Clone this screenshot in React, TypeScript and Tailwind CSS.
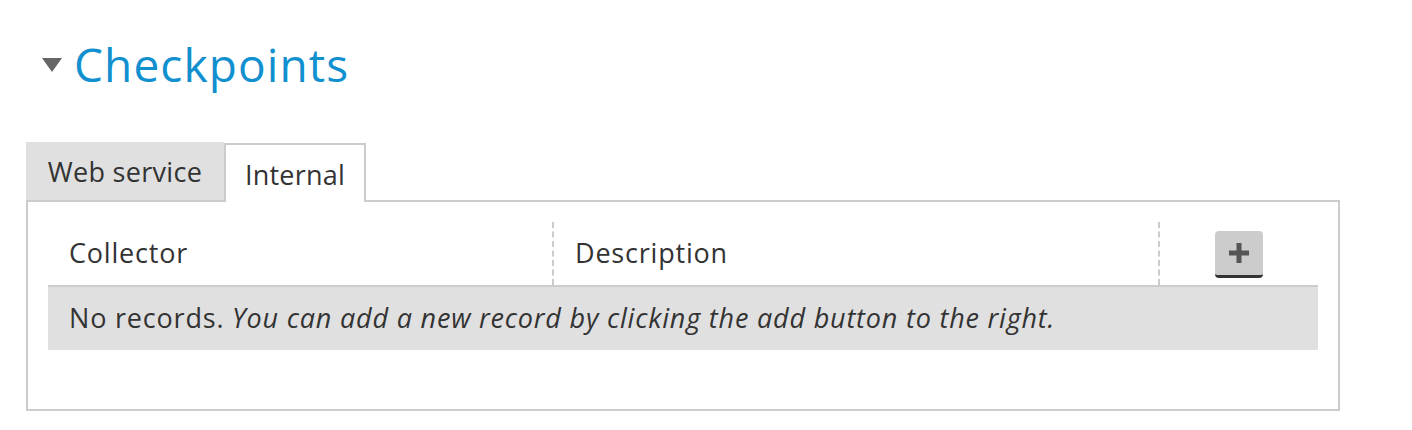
export default function App() {
  return (
    <div className="min-h-[430px] bg-white px-[26px] pt-[35px] font-['Open_Sans',sans-serif] text-[#333]">
      {/* section title */}
      <div className="flex items-center">
        <span className="ml-[16px] mr-[12px] mt-[2px] h-0 w-0 border-x-[10px] border-t-[14px] border-x-transparent border-t-[#666]" />
        <h2 className="text-[46px] leading-[58px] tracking-[1.1px] text-[#1090cf]">Checkpoints</h2>
      </div>

      {/* tabs */}
      <div className="mt-[49px] flex items-end">
        <div className="flex h-[58px] w-[198px] items-center justify-center bg-[#e0e0e0] pt-[3px] text-[27px] tracking-[0.3px]">Web service</div>
        <div className="relative -mb-[2px] flex h-[59px] w-[142px] items-center justify-center border-x-2 border-t-2 border-[#ccc] bg-white pt-[3px] text-[27px] tracking-[0.2px]">
          Internal
        </div>
      </div>

      <div className="w-[1314px] border-2 border-[#ccc] px-[20px] pb-[59px] pt-[20px]">
        <table className="w-full border-collapse text-[27px] tracking-[0.8px]">
          <thead>
            <tr className="h-[64px] border-b-2 border-[#ccc]">
              <th className="w-[505px] border-r-2 border-dashed border-[#ccc] pl-[21px] text-left font-normal">Collector</th>
              <th className="w-[606px] border-r-2 border-dashed border-[#ccc] pl-[21px] text-left font-normal">Description</th>
              <th className="text-center">
                <button className="inline-flex h-[47px] w-[48px] translate-y-[1px] items-center justify-center rounded-[4px] border-b-[3px] border-[#333] bg-[#ccc]">
                  <svg width="22" height="22" viewBox="0 0 22 22">
                    <path d="M11 1v20M1 11h20" stroke="#555" strokeWidth="5" />
                  </svg>
                </button>
              </th>
            </tr>
          </thead>
          <tbody>
            <tr className="h-[64px] bg-[#e0e0e0]">
              <td colSpan={3} className="pl-[21px]">
                No records. <em>You can add a new record by clicking the add button to the right.</em>
              </td>
            </tr>
          </tbody>
        </table>
      </div>
    </div>
  );
}
